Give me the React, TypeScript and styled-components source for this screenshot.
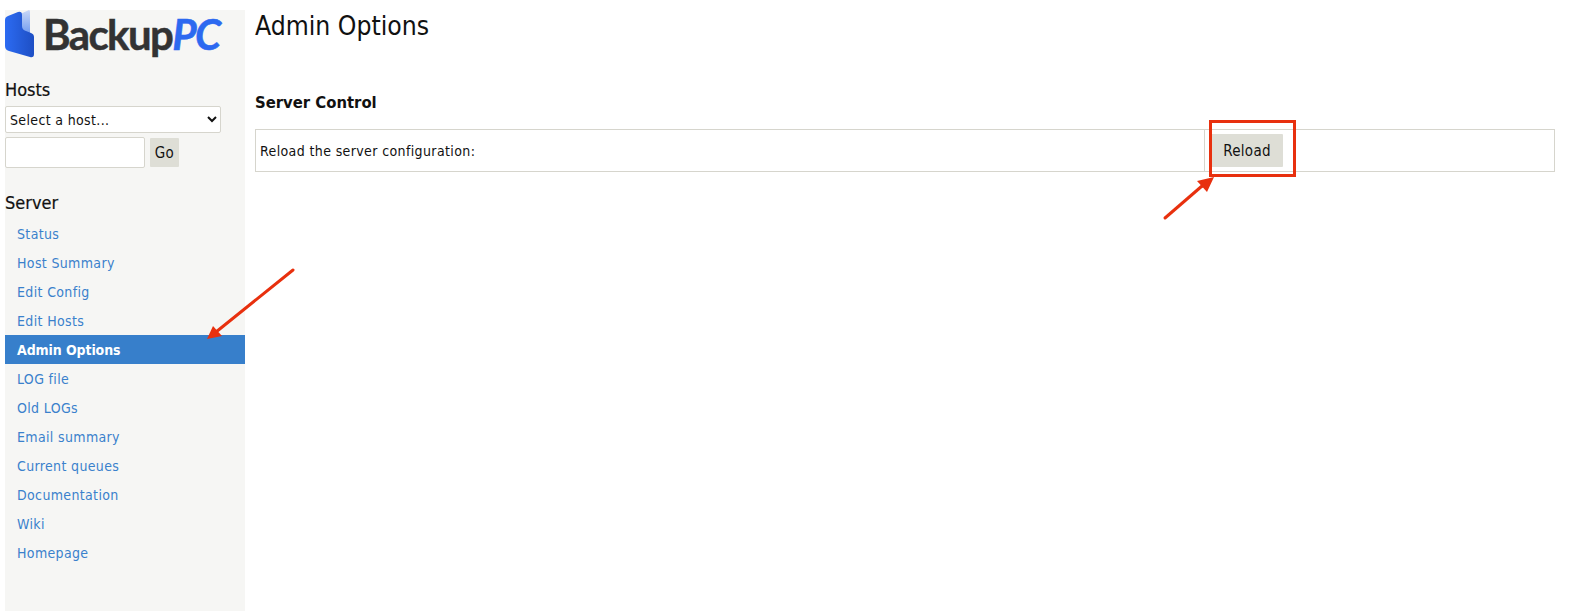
import styled, {createGlobalStyle} from 'styled-components'

const NAV_ITEMS = [
  'Status',
  'Host Summary',
  'Edit Config',
  'Edit Hosts',
  'Admin Options',
  'LOG file',
  'Old LOGs',
  'Email summary',
  'Current queues',
  'Documentation',
  'Wiki',
  'Homepage',
]

function Logo() {
  return (
    <LogoRow>
      <svg width="30" height="48" viewBox="0 0 30 48">
        <defs>
          <linearGradient id="logoBack" x1="0" y1="0" x2="0" y2="1">
            <stop offset="0" stopColor="#c9d8f7" />
            <stop offset="1" stopColor="#6f9bf0" />
          </linearGradient>
          <linearGradient id="logoFront" x1="0" y1="0" x2="1" y2="0">
            <stop offset="0" stopColor="#2c6bf2" />
            <stop offset="1" stopColor="#1e4fc4" />
          </linearGradient>
        </defs>
        <path d="M11 6 L24 0 Q25 0 25 2 L25 24 L11 24 Z" fill="url(#logoBack)" />
        <path
          d="M0 10 Q0 7 3 6 L13 2 Q17 1 17 5 L17 16 Q17 20 21 21 L26 23 Q29 24 29 27 L29 44 Q29 48 25 47 L4 41 Q0 40 0 36 Z"
          fill="url(#logoFront)"
        />
      </svg>
      <LogoText>
        Backup<LogoAccent>PC</LogoAccent>
      </LogoText>
    </LogoRow>
  )
}

function Sidebar() {
  return (
    <SidebarWrapper>
      <Logo />
      <SideHeading $top={22}>Hosts</SideHeading>
      <HostSelect defaultValue="">
        <option value="">Select a host...</option>
      </HostSelect>
      <SearchRow>
        <SearchInput />
        <PlainButton $small>Go</PlainButton>
      </SearchRow>
      <SideHeading $top={25}>Server</SideHeading>
      <NavList>
        {NAV_ITEMS.map(item => (
          <NavItem key={item} $active={item === 'Admin Options'}>
            {item}
          </NavItem>
        ))}
      </NavList>
    </SidebarWrapper>
  )
}

function Arrow({x, y, width, height, line, head}: {x: number; y: number; width: number; height: number; line: string; head: string}) {
  return (
    <ArrowSvg $x={x} $y={y} width={width} height={height}>
      <path d={line} stroke="#e8300e" strokeWidth="3" strokeLinecap="round" fill="none" />
      <path d={head} fill="#e8300e" />
    </ArrowSvg>
  )
}

export default function App() {
  return (
    <>
      <GlobalStyle />
      <Page>
        <Sidebar />
        <Main>
          <Title>Admin Options</Title>
          <Subtitle>Server Control</Subtitle>
          <ControlTable>
            <LabelCell>Reload the server configuration:</LabelCell>
            <ActionCell>
              <PlainButton>Reload</PlainButton>
            </ActionCell>
          </ControlTable>
        </Main>
        <Arrow
          x={200}
          y={265}
          width={100}
          height={85}
          line="M93 5 L16 67"
          head="M7 74 L13 61 L22 71 Z"
        />
        <Arrow
          x={1160}
          y={172}
          width={60}
          height={52}
          line="M5 46 L42 14"
          head="M54 5 L47 20 L37 9 Z"
        />
        <Highlight />
      </Page>
    </>
  )
}

const GlobalStyle = createGlobalStyle`
  html, body {
    margin: 0;
    background: #fff;
  }

  body {
    font-family: "DejaVu Sans", sans-serif;
    font-stretch: condensed;
    color: #111;
  }
`

const Page = styled.div`
  position: relative;
  display: flex;
  gap: 10px;
  box-sizing: border-box;
  height: 611px;
  padding: 10px 38px 0 5px;
  overflow: hidden;
`

const SidebarWrapper = styled.aside`
  flex: 0 0 240px;
  background: #f6f6f4;
`

const LogoRow = styled.div`
  display: flex;
  align-items: flex-start;
  gap: 8px;
  height: 48px;
`

const LogoText = styled.div`
  font-family: Lato, sans-serif;
  font-stretch: normal;
  font-size: 42px;
  font-weight: 700;
  line-height: 48px;
  letter-spacing: -1.6px;
  color: #333;
  -webkit-text-stroke: 0.5px currentColor;
`

const LogoAccent = styled.span`
  color: #2c69f0;
  font-style: italic;
`

const SideHeading = styled.h3<{$top: number}>`
  margin: ${p => p.$top}px 0 6px;
  font-size: 18px;
  font-weight: 400;
  line-height: 20px;
  color: #111;
  -webkit-text-stroke: 0.2px #111;
`

const HostSelect = styled.select`
  display: block;
  box-sizing: border-box;
  width: 216px;
  height: 27px;
  padding: 0;
  border: 1px solid #d6d5cd;
  border-radius: 2px;
  background: #fff;
  font-family: inherit;
  font-stretch: condensed;
  font-size: 14px;
  letter-spacing: 0.35px;
  color: #111;
`

const SearchRow = styled.div`
  display: flex;
  align-items: center;
  gap: 5px;
  margin-top: 4px;
`

const SearchInput = styled.input`
  box-sizing: border-box;
  width: 140px;
  height: 31px;
  border: 1px solid #d6d5cd;
  border-radius: 2px;
  background: #fff;
`

const PlainButton = styled.button<{$small?: boolean}>`
  box-sizing: border-box;
  width: ${p => (p.$small ? 29 : 72)}px;
  height: ${p => (p.$small ? 29 : 33)}px;
  padding: 0;
  border: 0;
  border-radius: 1px;
  background: #deded6;
  font-family: inherit;
  font-stretch: condensed;
  font-size: 15px;
  letter-spacing: 0.3px;
  color: #111;
`

const NavList = styled.nav`
  display: flex;
  flex-direction: column;
  margin-top: 6px;
`

const NavItem = styled.a<{$active?: boolean}>`
  height: 29px;
  padding-left: 12px;
  font-size: 14px;
  line-height: 30px;
  letter-spacing: ${p => (p.$active ? '-0.1px' : '0.35px')};
  font-weight: ${p => (p.$active ? 700 : 400)};
  color: ${p => (p.$active ? '#fff' : '#3a81cc')};
  background: ${p => (p.$active ? '#377fcb' : 'transparent')};
`

const Main = styled.main`
  flex: 1;
  min-width: 0;
`

const Title = styled.h1`
  margin: 0;
  font-size: 26.3px;
  font-weight: 400;
  line-height: 32px;
  color: #111;
`

const Subtitle = styled.h2`
  margin: 51px 0 16px;
  font-size: 16.5px;
  font-weight: 700;
  line-height: 20px;
  color: #111;
`

const ControlTable = styled.div`
  display: flex;
  height: 43px;
  box-sizing: border-box;
  border: 1px solid #d6d5cd;
`

const LabelCell = styled.div`
  flex: 0 0 949px;
  box-sizing: border-box;
  padding-left: 4px;
  font-size: 14px;
  letter-spacing: 0.38px;
  line-height: 42px;
  border-right: 1px solid #d6d5cd;
`

const ActionCell = styled.div`
  flex: 1;
  display: flex;
  align-items: center;
  padding-left: 6px;
`

const ArrowSvg = styled.svg<{$x: number; $y: number}>`
  position: absolute;
  left: ${p => p.$x}px;
  top: ${p => p.$y}px;
`

const Highlight = styled.div`
  position: absolute;
  left: 1209px;
  top: 120px;
  width: 87px;
  height: 57px;
  box-sizing: border-box;
  border: 3px solid #e8300e;
`
